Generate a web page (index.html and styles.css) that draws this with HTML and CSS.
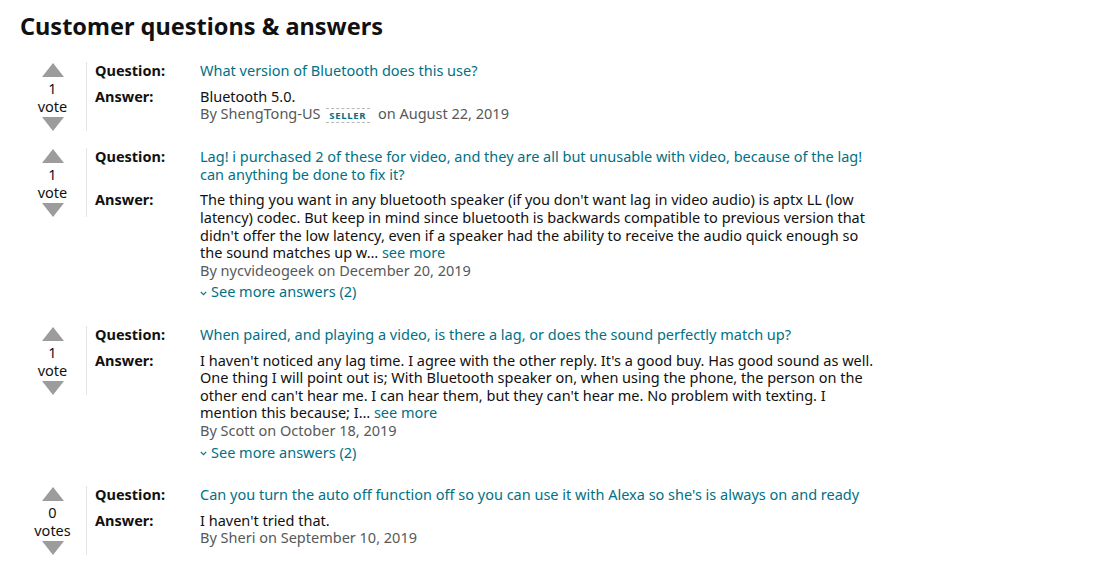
FILE: index.html
```html
<!DOCTYPE html>
<html lang="en">
<head>
<meta charset="utf-8">
<title>Customer questions &amp; answers</title>
<link rel="stylesheet" href="styles.css">
</head>
<body>
<div class="page">
  <h2 class="title">Customer questions &amp; answers</h2>

  <div class="qa">
    <div class="vote">
      <span class="arrow up"></span>
      <span class="count">1</span>
      <span class="count">vote</span>
      <span class="arrow down"></span>
    </div>
    <div class="body">
      <div class="row q">
        <span class="label">Question:</span>
        <a class="link">What version of Bluetooth does this use?</a>
      </div>
      <div class="row a">
        <span class="label">Answer:</span>
        <div class="ans">
          <div>Bluetooth 5.0.</div>
          <div class="by">By ShengTong-US <span class="seller">SELLER</span> on August 22, 2019</div>
        </div>
      </div>
    </div>
  </div>

  <div class="qa">
    <div class="vote">
      <span class="arrow up"></span>
      <span class="count">1</span>
      <span class="count">vote</span>
      <span class="arrow down"></span>
    </div>
    <div class="body">
      <div class="row q">
        <span class="label">Question:</span>
        <a class="link">Lag! i purchased 2 of these for video, and they are all but unusable with video, because of the lag! can anything be done to fix it?</a>
      </div>
      <div class="row a">
        <span class="label">Answer:</span>
        <div class="ans">
          <div>The thing you want in any bluetooth speaker (if you don't want lag in video audio) is aptx LL (low latency) codec. But keep in mind since bluetooth is backwards compatible to previous version that didn't offer the low latency, even if a speaker had the ability to receive the audio quick enough so the sound matches up w… <a class="link">see more</a></div>
          <div class="by">By nycvideogeek on December 20, 2019</div>
          <a class="more link"><svg class="chev" width="7" height="5" viewBox="0 0 7 5"><path d="M0.8 0.8 L3.5 3.6 L6.2 0.8" fill="none" stroke="#007185" stroke-width="1.2"/></svg>See more answers (2)</a>
        </div>
      </div>
    </div>
  </div>

  <div class="qa">
    <div class="vote">
      <span class="arrow up"></span>
      <span class="count">1</span>
      <span class="count">vote</span>
      <span class="arrow down"></span>
    </div>
    <div class="body">
      <div class="row q">
        <span class="label">Question:</span>
        <a class="link">When paired, and playing a video, is there a lag, or does the sound perfectly match up?</a>
      </div>
      <div class="row a">
        <span class="label">Answer:</span>
        <div class="ans">
          <div>I haven't noticed any lag time. I agree with the other reply. It's a good buy. Has good sound as well. One thing I will point out is; With Bluetooth speaker on, when using the phone, the person on the other end can't hear me. I can hear them, but they can't hear me. No problem with texting. I mention this because; I… <a class="link">see more</a></div>
          <div class="by">By Scott on October 18, 2019</div>
          <a class="more link"><svg class="chev" width="7" height="5" viewBox="0 0 7 5"><path d="M0.8 0.8 L3.5 3.6 L6.2 0.8" fill="none" stroke="#007185" stroke-width="1.2"/></svg>See more answers (2)</a>
        </div>
      </div>
    </div>
  </div>

  <div class="qa">
    <div class="vote">
      <span class="arrow up"></span>
      <span class="count">0</span>
      <span class="count">votes</span>
      <span class="arrow down"></span>
    </div>
    <div class="body">
      <div class="row q">
        <span class="label">Question:</span>
        <a class="link">Can you turn the auto off function off so you can use it with Alexa so she's is always on and ready</a>
      </div>
      <div class="row a">
        <span class="label">Answer:</span>
        <div class="ans">
          <div>I haven't tried that.</div>
          <div class="by">By Sheri on September 10, 2019</div>
        </div>
      </div>
    </div>
  </div>
</div>
</body>
</html>
```

FILE: styles.css
```css
html, body {
  margin: 0;
  padding: 0;
  background: #fff;
}
body {
  font-family: "Noto Sans", "Open Sans", sans-serif;
  font-size: 14.5px;
  line-height: 17.6px;
  color: #111;
}
.page {
  padding: 12px 20px 0 20px;
}
.title {
  margin: 0 0 22px 0;
  font-size: 23.5px;
  line-height: 28px;
  font-weight: 700;
  color: #111;
}
.qa {
  display: flex;
  align-items: flex-start;
  margin-bottom: 17px;
}
.vote {
  width: 67px;
  height: 69px;
  flex: none;
  border-right: 1px solid #e3e3e3;
  display: flex;
  flex-direction: column;
  align-items: center;
  box-sizing: border-box;
  padding-right: 1px;
}
.vote .count {
  line-height: 18px;
  font-size: 14.5px;
  color: #111;
}
.arrow {
  width: 0;
  height: 0;
  border-left: 11px solid transparent;
  border-right: 11px solid transparent;
}
.arrow.up {
  margin-top: 1px;
  border-bottom: 14px solid #9c9c9c;
  margin-bottom: 2px;
}
.arrow.down {
  margin-top: 2px;
  border-top: 14px solid #9c9c9c;
}
.body {
  padding-left: 8px;
  padding-bottom: 8px;
}
.row {
  display: flex;
}
.row.a {
  margin-top: 8px;
}
.label {
  width: 105px;
  flex: none;
  font-weight: 700;
}
.link {
  color: #007185;
  text-decoration: none;
  cursor: pointer;
}
.row.q .link, .ans {
  width: 676px;
}
.by {
  color: #565959;
}
.seller {
  display: inline-block;
  font-size: 9.5px;
  line-height: 11px;
  font-weight: 700;
  letter-spacing: 0.7px;
  color: #007185;
  border-top: 1px dashed #b8b8b8;
  border-bottom: 1px dashed #b8b8b8;
  padding: 1px 4px 1px 3px;
  margin: 0 4px 0 2px;
  vertical-align: 0;
}
.more {
  display: flex;
  align-items: center;
  margin-top: 4px;
}
.chev {
  flex: none;
  margin: 2px 4px 0 0;
}
```
